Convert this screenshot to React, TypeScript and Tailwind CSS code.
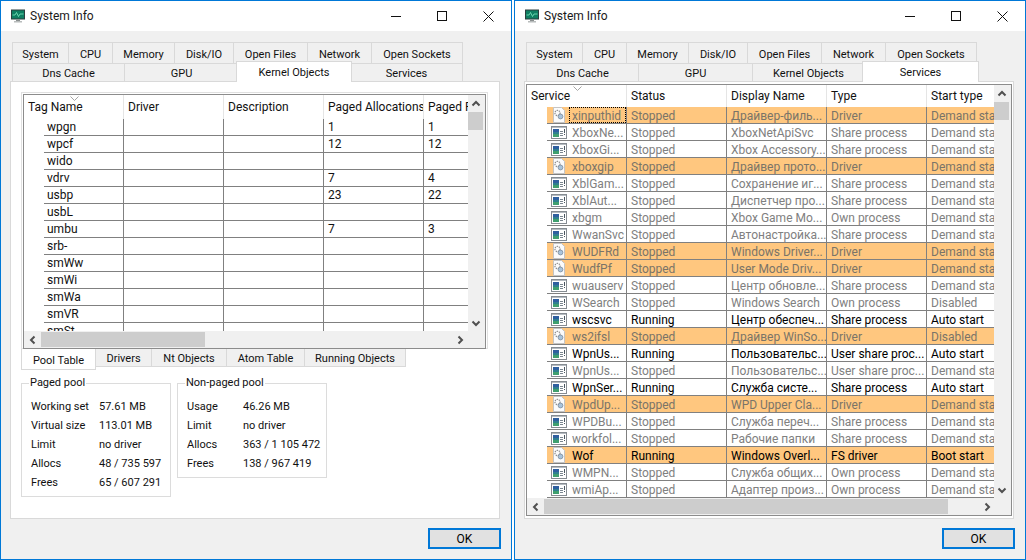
import React from "react";

const Chevron = ({ dir }: { dir: "up" | "down" | "left" | "right" }) => {
  const pts = {
    up: "1.5,6.5 5,3 8.5,6.5",
    down: "1.5,3.5 5,7 8.5,3.5",
    left: "6.5,1.5 3,5 6.5,8.5",
    right: "3.5,1.5 7,5 3.5,8.5",
  }[dir];
  return (
    <svg width="10" height="10" viewBox="0 0 10 10">
      <polyline points={pts} fill="none" stroke="#505050" strokeWidth="2" />
    </svg>
  );
};

const AppIcon = () => (
  <svg width="14" height="14" viewBox="0 0 14 14" className="shrink-0">
    <rect x="0" y="0.5" width="14" height="10" fill="#2c3e3e" />
    <rect x="1" y="1.5" width="12" height="8" fill="#0f7f62" />
    <polyline points="1.5,6 4,6 5.5,3.5 7.5,7.5 9,5 12.5,5" fill="none" stroke="#7fe8c0" strokeWidth="0.8" />
    <rect x="5" y="10.5" width="4" height="1.5" fill="#8a8f8f" />
    <rect x="3" y="12" width="8" height="1.5" fill="#b8bcbc" />
  </svg>
);

const SortArrow = () => (
  <svg width="9" height="5" viewBox="0 0 9 5" className="block">
    <polyline points="0.5,0.5 4.5,4.5 8.5,0.5" fill="none" stroke="#a6a6a6" strokeWidth="1" />
  </svg>
);

const ServiceIcon = () => (
  <svg width="16" height="13" viewBox="0 0 16 13" className="shrink-0">
    <rect x="0.5" y="0.5" width="15" height="12" fill="#fff" stroke="#868c92" />
    <rect x="1" y="1" width="14" height="1" fill="#b4bac0" />
    <rect x="2" y="3" width="6" height="8" fill="#2f7f8f" />
    <rect x="2" y="3" width="6" height="3" fill="#2f5f9f" />
    <rect x="2" y="8" width="6" height="3" fill="#3f9f6f" />
    <rect x="9" y="5" width="3" height="1" fill="#7a8690" />
    <rect x="9" y="7" width="3" height="1" fill="#7a8690" />
    <rect x="9" y="9" width="3" height="1" fill="#7a8690" />
    <rect x="13" y="3" width="1" height="4" fill="#4a5660" />
    <rect x="13" y="8" width="1" height="1" fill="#4a5660" />
  </svg>
);

const DriverIcon = () => (
  <svg width="14" height="16" viewBox="0 0 14 16" className="shrink-0">
    <path d="M1.5 0.5H9.5L12.5 3.5V15.5H1.5Z" fill="#fbfbfb" stroke="#c4c4c4" />
    <circle cx="5.5" cy="6" r="2.6" fill="none" stroke="#8f8f8f" strokeWidth="1.2" strokeDasharray="1.4 0.8" />
    <circle cx="8.5" cy="9.5" r="2.4" fill="#a9c4dc" stroke="#7a8a9a" strokeWidth="0.8" />
  </svg>
);

const Tab = ({ label, w, selected, drop }: { label: string; w: string; selected?: boolean; drop?: string }) =>
  selected ? (
    <div className={`${w} relative z-10 -mx-[2px] -mt-[2px] flex h-[21px] items-center justify-center border border-b-0 border-[#d9d9d9] bg-white pt-px`}>
      {label}
    </div>
  ) : (
    <div className={`${w} flex items-center justify-center border-l border-t border-[#d9d9d9] bg-[#f0f0f0] last:border-r ${drop ?? ""}`}>
      {label}
    </div>
  );

const TabRows = ({ active }: { active: string }) => (
  <div className="ml-[11px] w-[451px] shrink-0">
    <div className="flex h-[21px]">
      <Tab drop="pt-[3px]" label="System" w="w-[56px]" />
      <Tab drop="pt-[3px]" label="CPU" w="w-[44px]" />
      <Tab drop="pt-[3px]" label="Memory" w="w-[62px]" />
      <Tab drop="pt-[3px]" label="Disk/IO" w="w-[59px]" />
      <Tab drop="pt-[3px]" label="Open Files" w="w-[74px]" />
      <Tab drop="pt-[3px]" label="Network" w="w-[64px]" />
      <Tab drop="pt-[3px]" label="Open Sockets" w="w-[92px]" />
    </div>
    <div className="flex h-[18px]">
      <Tab drop="pt-[2px]" label="Dns Cache" w="w-[112px]" />
      <Tab drop="pt-[2px]" label="GPU" w="w-[114px]" />
      <Tab drop="pt-[2px]" label="Kernel Objects" w={active === "Kernel Objects" ? "w-[116px]" : "w-[112px]"} selected={active === "Kernel Objects"} />
      <Tab drop="pt-[2px]" label="Services" w={active === "Services" ? "w-[117px]" : "w-[113px]"} selected={active === "Services"} />
    </div>
  </div>
);

const WindowShell = ({ active, children }: { active: string; children: React.ReactNode }) => (
  <div className="flex h-[560px] w-[512px] shrink-0 flex-col border border-[#0078d7] bg-[#f0f0f0]">
    <div className="flex h-[30px] shrink-0 items-center bg-white">
      <div className="ml-[10px] mr-[5px]">
        <AppIcon />
      </div>
      <span className="flex-1 text-[12px] text-[#1a1a1a]">System Info</span>
      <div className="flex h-full w-[46px] items-center justify-center">
        <svg width="10" height="10" viewBox="0 0 10 10"><line x1="0" y1="5.5" x2="10" y2="5.5" stroke="#111" /></svg>
      </div>
      <div className="flex h-full w-[46px] items-center justify-center">
        <svg width="10" height="10" viewBox="0 0 10 10"><rect x="0.5" y="0.5" width="9" height="9" fill="none" stroke="#111" /></svg>
      </div>
      <div className="flex h-full w-[46px] items-center justify-center">
        <svg width="11" height="11" viewBox="0 0 11 11"><path d="M0.5 0.5L10.5 10.5M10.5 0.5L0.5 10.5" stroke="#111" /></svg>
      </div>
    </div>
    <div className="h-[11px] shrink-0" />
    <TabRows active={active} />
    <div className="ml-[9px] h-[438px] w-[490px] shrink-0 border border-[#d9d9d9] bg-white">{children}</div>
    <div className="flex justify-end pr-[10px] pt-[9px]">
      <div className="flex h-[21px] w-[73px] items-center justify-center border-2 border-[#0078d7] bg-[#e1e1e1] text-[12px] text-black">OK</div>
    </div>
  </div>
);

const VScroll = () => (
  <div className="flex w-[17px] shrink-0 flex-col bg-[#f0f0f0] pr-[2px]">
    <div className="flex h-[17px] shrink-0 items-center justify-center"><Chevron dir="up" /></div>
    <div className="flex-1"><div className="h-[18px] bg-[#cdcdcd]" /></div>
    <div className="flex h-[17px] shrink-0 items-center justify-center"><Chevron dir="down" /></div>
  </div>
);

const HScroll = ({ thumb, width }: { thumb: string; width: string }) => (
  <div className="flex h-[17px] shrink-0 bg-[#f0f0f0]">
    <div className={`${width} flex py-px`}>
      <div className="flex w-[17px] shrink-0 items-center justify-center"><Chevron dir="left" /></div>
      <div className="flex-1"><div className={`${thumb} h-full bg-[#cdcdcd]`} /></div>
      <div className="flex w-[17px] shrink-0 items-center justify-center"><Chevron dir="right" /></div>
    </div>
  </div>
);

const HeaderCell = ({ children, arrow }: { children: string; arrow?: boolean }) => (
  <div className="relative flex w-[100px] shrink-0 items-center overflow-hidden whitespace-nowrap border-r border-[#e5e5e5] pl-[4px] last:border-r-0">
    {arrow && (
      <span className="absolute left-[46px] top-[1px]">
        <SortArrow />
      </span>
    )}
    {children}
  </div>
);

const poolRows: [string, string, string][] = [
  ["wpgn", "1", "1"],
  ["wpcf", "12", "12"],
  ["wido", "", ""],
  ["vdrv", "7", "4"],
  ["usbp", "23", "22"],
  ["usbL", "", ""],
  ["umbu", "7", "3"],
  ["srb-", "", ""],
  ["smWw", "", ""],
  ["smWi", "", ""],
  ["smWa", "", ""],
  ["smVR", "", ""],
  ["smSt", "", ""],
];

const PoolTable = () => (
  <div className="h-[257px] border border-[#e0e0e0] p-px text-[12px]">
    <div className="flex h-[255px] flex-col border border-[#8c8c8c]">
      <div className="flex min-h-0 flex-1">
        <div className="min-w-0 flex-1 overflow-hidden">
          <div className="flex h-[24px]">
            <HeaderCell arrow>Tag Name</HeaderCell>
            <HeaderCell>Driver</HeaderCell>
            <HeaderCell>Description</HeaderCell>
            <HeaderCell>Paged Allocations</HeaderCell>
            <HeaderCell>Paged Frees</HeaderCell>
          </div>
          {poolRows.map((r) => (
            <div key={r[0]} className="flex h-[17px] pl-[20px]">
              <div className="flex flex-1 border-b border-[#808080]">
                <div className="w-[80px] shrink-0 border-r border-[#808080] pl-[3px] leading-[16px]">{r[0]}</div>
                <div className="w-[100px] shrink-0 border-r border-[#808080]" />
                <div className="w-[100px] shrink-0 border-r border-[#808080]" />
                <div className="w-[100px] shrink-0 border-r border-[#808080] pl-[4px] leading-[16px]">{r[1]}</div>
                <div className="flex-1 pl-[4px] leading-[16px]">{r[2]}</div>
              </div>
            </div>
          ))}
        </div>
        <VScroll />
      </div>
      <HScroll thumb="w-[164px]" width="w-[444px]" />
    </div>
  </div>
);

const SubTabs = () => {
  const others: [string, string][] = [
    ["Drivers", "w-[56px]"],
    ["Nt Objects", "w-[75px]"],
    ["Atom Table", "w-[78px]"],
    ["Running Objects", "w-[101px]"],
  ];
  return (
    <div className="flex h-[21px] items-start">
      <div className="flex h-[21px] w-[75px] items-center justify-center border border-t-0 border-[#d9d9d9] bg-white pt-[3px]">Pool Table</div>
      {others.map(([l, w]) => (
        <div key={l} className={`${w} flex h-[18px] items-center justify-center border-b border-r border-[#d9d9d9] bg-[#f0f0f0] pt-[3px]`}>{l}</div>
      ))}
    </div>
  );
};

const Group = ({ title, labelW, rows }: { title: string; labelW: string; rows: [string, string][] }) => (
  <fieldset className="w-[150px] border border-[#dcdcdc] pb-[4px]">
    <legend className="ml-[7px] px-px leading-[16px]">{title}</legend>
    <div className="pl-[9px] pt-[6px]">
      {rows.map(([a, b]) => (
        <div key={a} className="flex h-[19px] items-center whitespace-nowrap">
          <span className={`${labelW} shrink-0`}>{a}</span>
          <span>{b}</span>
        </div>
      ))}
    </div>
  </fieldset>
);

type Row = [string, string, string, string, string, boolean];
const S = "Share process";
const D = "Demand start";
const svc: Row[] = [
  ["xinputhid", "Stopped", "Драйвер-филь...", "Driver", D, true],
  ["XboxNe...", "Stopped", "XboxNetApiSvc", S, D, false],
  ["XboxGi...", "Stopped", "Xbox Accessory...", S, D, false],
  ["xboxgip", "Stopped", "Драйвер прото...", "Driver", D, true],
  ["XblGam...", "Stopped", "Сохранение иг...", S, D, false],
  ["XblAut...", "Stopped", "Диспетчер про...", S, D, false],
  ["xbgm", "Stopped", "Xbox Game Mo...", "Own process", D, false],
  ["WwanSvc", "Stopped", "Автонастройка...", S, D, false],
  ["WUDFRd", "Stopped", "Windows Driver...", "Driver", D, true],
  ["WudfPf", "Stopped", "User Mode Driv...", "Driver", D, true],
  ["wuauserv", "Stopped", "Центр обновле...", S, D, false],
  ["WSearch", "Stopped", "Windows Search", "Own process", "Disabled", false],
  ["wscsvc", "Running", "Центр обеспеч...", S, "Auto start", false],
  ["ws2ifsl", "Stopped", "Драйвер WinSo...", "Driver", "Disabled", true],
  ["WpnUs...", "Running", "Пользовательс...", "User share proc...", "Auto start", false],
  ["WpnUs...", "Stopped", "Пользовательс...", "User share proc...", D, false],
  ["WpnSer...", "Running", "Служба систе...", S, "Auto start", false],
  ["WpdUp...", "Stopped", "WPD Upper Cla...", "Driver", D, true],
  ["WPDBu...", "Stopped", "Служба переч...", S, D, false],
  ["workfol...", "Stopped", "Рабочие папки", S, D, false],
  ["Wof", "Running", "Windows Overl...", "FS driver", "Boot start", true],
  ["WMPN...", "Stopped", "Служба общих...", "Own process", D, false],
  ["wmiAp...", "Stopped", "Адаптер произ...", "Own process", D, false],
  ["WmiAcpi", "Stopped", "", "Driver", D, true],
];

const ServiceRow = ({ r, focus }: { r: Row; focus?: boolean }) => {
  const text = r[1] === "Running" ? "text-black" : r[5] ? "text-[#7a7468]" : "text-[#808080]";
  const bg = r[5] ? "bg-[#ffc77f]" : "bg-white";
  const cell = "shrink-0 overflow-hidden whitespace-nowrap border-r border-[#808080] pl-[4px] pt-px leading-[16px]";
  return (
    <div className={`flex h-[17px] pl-[20px] ${text}`}>
      <div className={`flex flex-1 border-b border-[#808080] ${bg}`}>
        <div className="flex w-[80px] shrink-0 border-r border-[#808080]">
          <div className="flex w-[22px] shrink-0 items-center justify-center pl-px">
            {r[5] ? <DriverIcon /> : <ServiceIcon />}
          </div>
          <div className={`min-w-0 flex-1 overflow-hidden whitespace-nowrap pl-[3px] pt-px leading-[16px] ${focus ? "outline-1 -outline-offset-1 outline-dotted outline-black" : ""}`}>{r[0]}</div>
        </div>
        <div className={`w-[100px] ${cell}`}>{r[1]}</div>
        <div className={`w-[100px] ${cell}`}>{r[2]}</div>
        <div className={`w-[100px] ${cell}`}>{r[3]}</div>
        <div className="min-w-0 flex-1 overflow-hidden whitespace-nowrap pl-[4px] pt-px leading-[16px]">{r[4]}</div>
      </div>
    </div>
  );
};

const ServicesTable = () => (
  <div className="h-full px-px pb-[2px] pt-[2px] text-[12px]">
    <div className="flex h-full flex-col border border-[#8c8c8c]">
      <div className="flex min-h-0 flex-1">
        <div className="min-w-0 flex-1 overflow-hidden">
          <div className="flex h-[22px]">
            <HeaderCell arrow>Service</HeaderCell>
            <HeaderCell>Status</HeaderCell>
            <HeaderCell>Display Name</HeaderCell>
            <HeaderCell>Type</HeaderCell>
            <HeaderCell>Start type</HeaderCell>
          </div>
          {svc.map((r, i) => (
            <ServiceRow key={i} r={r} focus={i === 0} />
          ))}
        </div>
        <VScroll />
      </div>
      <HScroll thumb="w-[404px]" width="w-[468px]" />
    </div>
  </div>
);

export default function App() {
  return (
    <div className="flex h-[560px] w-[1026px] gap-[2px] overflow-hidden bg-white font-['Roboto','Noto_Sans',sans-serif] text-[11px] leading-[16px] text-[#111]">
      <WindowShell active="Kernel Objects">
        <div className="pl-[10px] pr-[11px] pt-[10px]">
          <PoolTable />
          <SubTabs />
          <div className="mt-[5px] flex items-start gap-[6px]">
            <Group
              title="Paged pool"
              labelW="w-[68px]"
              rows={[
                ["Working set", "57.61 MB"],
                ["Virtual size", "113.01 MB"],
                ["Limit", "no driver"],
                ["Allocs", "48 / 735 597"],
                ["Frees", "65 / 607 291"],
              ]}
            />
            <Group
              title="Non-paged pool"
              labelW="w-[56px]"
              rows={[
                ["Usage", "46.26 MB"],
                ["Limit", "no driver"],
                ["Allocs", "363 / 1 105 472"],
                ["Frees", "138 / 967 419"],
              ]}
            />
          </div>
        </div>
      </WindowShell>
      <WindowShell active="Services">
        <ServicesTable />
      </WindowShell>
    </div>
  );
}
